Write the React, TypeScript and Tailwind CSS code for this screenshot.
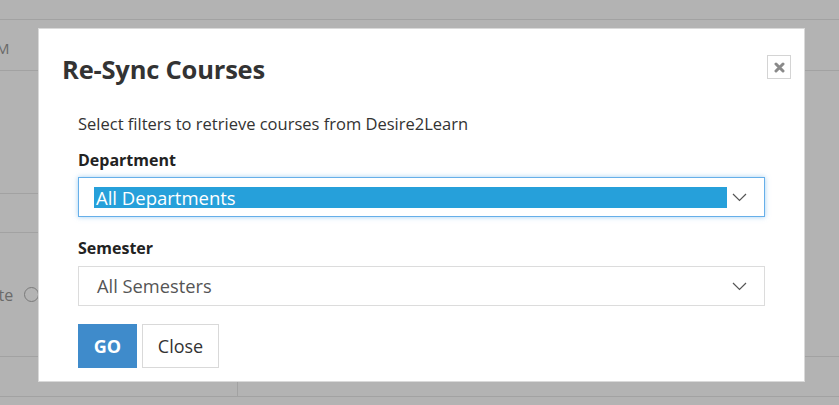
import React from "react";

const font = { fontFamily: '"Open Sans", "Noto Sans", "Liberation Sans", sans-serif' };

const Chevron = () => (
  <svg width="15" height="9" viewBox="0 0 15 9" fill="none" className="shrink-0">
    <path d="M1 1l6.5 6.5L14 1" stroke="#555" strokeWidth="1.2" />
  </svg>
);

const Backdrop = () => (
  <div className="flex flex-col h-full text-[#6a6a6a]">
    <div className="h-[20px] border-b border-[#a2a2a2] shrink-0" />
    <div className="h-[51px] border-b border-[#a2a2a2] shrink-0 flex items-center pt-[6px] text-[15px]">
      <span className="-ml-[13px]">PM</span>
    </div>
    <div className="flex flex-1">
      <div className="w-[238px] flex flex-col">
        <div className="h-[123px] border-b border-[#a2a2a2]" />
        <div className="h-[39px] border-b border-[#a2a2a2]" />
        <div className="h-[124px] border-b border-[#a2a2a2] flex items-center gap-[11px] text-[16px]">
          <span className="-ml-[22px]">Date</span>
          <span className="w-[15px] h-[15px] rounded-full border border-[#7a7a7a]" />
        </div>
        <div className="h-[40px] border-b border-[#a2a2a2] border-r" />
      </div>
      <div className="flex-1 flex flex-col">
        <div className="h-[286px] border-b border-[#a2a2a2]" />
        <div className="h-[40px] border-b border-[#a2a2a2]" />
      </div>
    </div>
  </div>
);

export default function App() {
  return (
    <div className="relative w-[839px] h-[405px] overflow-hidden bg-[#b3b3b3]" style={font}>
      <Backdrop />
      <div className="absolute left-[38px] top-[28px] w-[767px] h-[354px] bg-white border border-[#d9d9d9] text-[#333]">
        <div className="flex items-start justify-between pl-[23px] pr-[13px] pt-[23px]">
          <h2 className="text-[25.5px] font-bold leading-[34px] text-[#333] tracking-[-0.2px]">Re-Sync Courses</h2>
          <button className="mt-[3px] w-[24px] h-[24px] border border-[#d4d4d4] flex items-center justify-center">
            <svg width="11" height="11" viewBox="0 0 11 11">
              <path d="M2 2l7 7M9 2l-7 7" stroke="#8a8a8a" strokeWidth="3" strokeLinecap="round" />
            </svg>
          </button>
        </div>
        <div className="px-[39px] pt-[26px]">
          <p className="text-[16.5px] leading-[24px]">Select filters to retrieve courses from Desire2Learn</p>
          <label className="block mt-[13px] text-[16px] font-bold leading-[22px] text-[#222]">Department</label>
          <div className="mt-[6px] h-[40px] border border-[#66afe9] shadow-[0_0_5px_rgba(102,175,233,0.6)] flex items-center pl-[15px] pr-[17px] gap-[5px]">
            <div className="flex-1 h-[21px] bg-[#26a0da] text-white text-[18.5px] leading-[21px] pl-[2px]">All Departments</div>
            <Chevron />
          </div>
          <label className="block mt-[20px] text-[16px] font-bold leading-[22px] text-[#222]">Semester</label>
          <div className="mt-[7px] h-[40px] border border-[#dcdcdc] flex items-center pl-[18px] pr-[17px]">
            <div className="flex-1 text-[18.3px] text-[#555]">All Semesters</div>
            <Chevron />
          </div>
          <div className="mt-[18px] flex gap-[5px]">
            <button className="w-[59px] h-[44px] bg-[#3f8bcb] text-white font-bold text-[18px]">GO</button>
            <button className="w-[77px] h-[44px] border border-[#d9d9d9] text-[#333] text-[18px]">Close</button>
          </div>
        </div>
      </div>
    </div>
  );
}
